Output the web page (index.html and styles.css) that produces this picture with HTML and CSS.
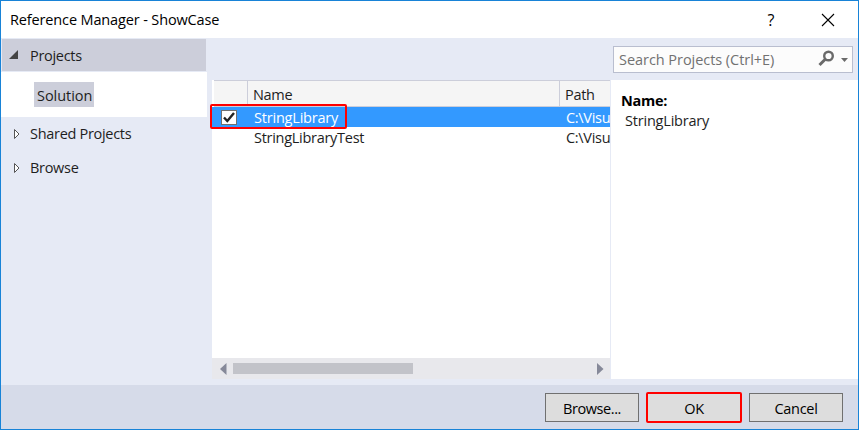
FILE: index.html
```html
<!DOCTYPE html>
<html lang="en">
<head>
<meta charset="utf-8">
<title>Reference Manager - ShowCase</title>
<link rel="stylesheet" href="styles.css">
</head>
<body>
<div class="dialog">
  <header class="titlebar">
    <span class="title">Reference Manager - ShowCase</span>
    <span class="help">?</span>
    <svg class="close" width="14" height="14" viewBox="0 0 14 14"><path d="M1 1L13 13M13 1L1 13" stroke="#000" stroke-width="1.1" fill="none"/></svg>
  </header>
  <main class="content">
    <nav class="sidebar">
      <div class="group active">
        <svg width="10" height="10" viewBox="0 0 10 10"><path d="M9 0V9H0Z" fill="#444"/></svg>
        <span class="t-projects">Projects</span>
      </div>
      <div class="children"><span class="chip">Solution</span></div>
      <div class="group">
        <svg width="8" height="12" viewBox="0 0 8 12"><path d="M2.500 1.500V10.500L7 6Z" fill="#fff" stroke="#555"/></svg>
        <span class="t-shared">Shared Projects</span>
      </div>
      <div class="group">
        <svg width="8" height="12" viewBox="0 0 8 12"><path d="M2.500 1.500V10.500L7 6Z" fill="#fff" stroke="#555"/></svg>
        <span class="t-browse">Browse</span>
      </div>
    </nav>
    <section class="list">
      <div class="row head"><span class="check"></span><span class="name">Name</span><span class="path">Path</span></div>
      <div class="row selected">
        <span class="check"><svg width="16" height="15" viewBox="0 0 16 15"><rect x=".5" y=".5" width="15" height="14" fill="#fff" stroke="#707070"/><path d="M3 7.500L6.300 11L13 3" fill="none" stroke="#222" stroke-width="2.400"/></svg></span>
        <span class="name t-lib">StringLibrary</span><span class="path">C:\Visu</span>
        <span class="highlight"></span>
      </div>
      <div class="row"><span class="check"></span><span class="name t-test">StringLibraryTest</span><span class="path">C:\Visu</span></div>
      <div class="scrollbar">
        <svg width="7" height="12" viewBox="0 0 7 12"><path d="M6.500 0V12L0 6Z" fill="#868999"/></svg>
        <span class="thumb"></span>
        <svg width="7" height="12" viewBox="0 0 7 12"><path d="M0 0V12L6.500 6Z" fill="#868999"/></svg>
      </div>
    </section>
    <aside class="side">
      <div class="search">
        <span class="t-search">Search Projects (Ctrl+E)</span>
        <svg class="lens" width="17" height="17" viewBox="0 0 17 17"><circle cx="10.500" cy="6" r="4.300" fill="none" stroke="#6a6a6a" stroke-width="2.400"/><path d="M7.500 9L1.500 15" stroke="#6a6a6a" stroke-width="3"/></svg>
        <svg width="7" height="4" viewBox="0 0 7 4"><path d="M0 0H7L3.500 4Z" fill="#6a6a6a"/></svg>
      </div>
      <div class="details">
        <div class="label">Name:</div>
        <div class="value t-lib">StringLibrary</div>
      </div>
    </aside>
  </main>
  <footer class="footer">
    <button class="btn t-btn">Browse...</button>
    <button class="btn ok">OK</button>
    <button class="btn t-cancel">Cancel</button>
  </footer>
</div>
</body>
</html>
```
FILE: styles.css
```css
* { box-sizing: border-box; }
body { margin: 0; font: 14.500px/20px "Open Sans", "Noto Sans", sans-serif; color: #1e1e1e; letter-spacing: -0.300px; white-space: nowrap; }
svg { display: block; flex: none; }
.dialog { width: 859px; height: 430px; border: 1px solid #1883d7; display: flex; flex-direction: column; background: #e6eaf5; }
.titlebar { height: 37px; background: #fff; display: flex; align-items: center; padding: 0 24px 0 9px; color: #000; }
.title { flex: 1; letter-spacing: -0.140px; }
.help { margin-right: 47px; font-size: 16px; }
.close { margin-right: -1px; }
.content { height: 347px; display: flex; }
.sidebar { width: 206px; margin-right: 5px; padding-top: 1px; }
.group { height: 34px; display: flex; align-items: center; padding-left: 11px; }
.group svg { margin-right: 10px; }
.group.active { height: 32px; margin: 0 1px; background: #ccceda; padding: 0 0 0 7px; }
.group.active svg { margin-right: 11px; }
.t-projects { padding-top: 2px; }
.t-projects { letter-spacing: -0.300px; }
.children { height: 45px; background: #fff; margin-top: 1px; padding: 10px 0 0 33px; }
.chip { display: block; width: 60px; height: 25px; line-height: 28px; padding-left: 3px; background: #ccceda; letter-spacing: -0.050px; }
.list { width: 398px; height: 299px; margin-top: 42px; background: #fff; display: flex; flex-direction: column; }
.row { display: flex; height: 20px; position: relative; line-height: 22px; }
.row.head { height: 27px; margin-left: 2px; background: #f5f5f5; border-top: 1px solid #ccceda; border-bottom: 1px solid #ccceda; line-height: 28px; }
.check { width: 35px; flex: none; padding: 3px 0 0 9px; }
.name { width: 312px; flex: none; padding-left: 7px; }
.path { flex: 1; overflow: hidden; padding-left: 7px; }
.head .check { width: 33px; }
.head .name, .head .path { border-left: 1px solid #ccceda; padding-left: 5px; }
.t-lib { letter-spacing: -0.200px; }
.t-test { letter-spacing: -0.280px; }
.selected { background: #3399ff; color: #fff; }
.highlight { position: absolute; left: -2px; top: -3px; width: 137px; height: 25px; border: 2px solid #f00; border-radius: 2px; }
.scrollbar { margin-top: auto; height: 21px; background: #e8e8ec; display: flex; align-items: center; padding: 0 6px 0 8px; }
.thumb { width: 180px; height: 11px; background: #c2c3c9; margin: 0 auto 0 6px; }
.side { width: 247px; margin-left: 1px; padding-top: 8px; }
.search { height: 27px; width: 240px; margin-left: 2px; border: 1px solid #b9becf; background: #fcfcfc; color: #717171; display: flex; align-items: center; padding: 0 4px 0 5px; }
.t-search { flex: 1; letter-spacing: -0.050px; padding-top: 1px; }
.lens { margin: -3px 6px 0 0; }
.details { margin-top: 7px; height: 299px; background: #fff; padding: 11px 0 0 10px; }
.label { font-weight: 700; color: #000; }
.value { padding-left: 4px; }
.footer { flex: 1; background: #d6dbe9; display: flex; padding: 8px 15px 0; justify-content: flex-end; gap: 10px; }
.btn { width: 94px; height: 29px; padding: 0; border: 1px solid #707070; background: #ddd; font: inherit; letter-spacing: -0.300px; color: #000; line-height: 29px; }
.t-btn { letter-spacing: -0.420px; }
.btn.ok { width: 96px; height: 31px; margin: -1px -3px 0; border: 2px solid #f00; border-radius: 2px; }
```
